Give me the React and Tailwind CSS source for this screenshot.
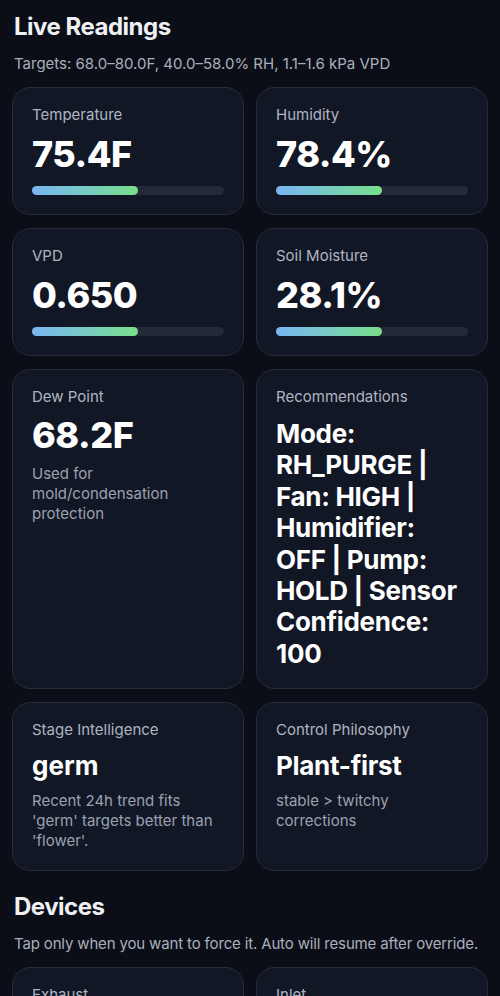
import React from "react";

const font = { fontFamily: "Inter, 'Noto Sans', sans-serif" };

function Bar({ pct }) {
  return (
    <div className="mt-3 h-[9px] w-full rounded-full bg-[#232938]">
      <div
        className="h-full rounded-full bg-gradient-to-r from-[#7ab4f2] to-[#79de88]"
        style={{ width: `${pct}%` }}
      />
    </div>
  );
}

function Card({ children }) {
  return (
    <div className="rounded-[18px] border border-[#262c3b] bg-[#121726] px-[19px] pt-[17px] pb-[19px]">
      {children}
    </div>
  );
}

function Label({ children }) {
  return <div className="text-[15px] leading-5 text-[#aeb5c2]">{children}</div>;
}

function Reading({ label, value, pct }) {
  return (
    <Card>
      <Label>{label}</Label>
      <div className="mt-[9px] text-[36px] font-extrabold leading-10 tracking-[-0.5px] text-white">
        {value}
      </div>
      <Bar pct={pct} />
    </Card>
  );
}

function Note({ children }) {
  return <div className="text-[15px] leading-5 text-[#9aa2b0]">{children}</div>;
}

export default function App() {
  return (
    <div style={font} className="min-h-screen bg-[#0b0e16] px-3 pt-[11px] pb-6 text-white">
      <h1 className="px-[2px] text-2xl font-bold leading-8 tracking-[-0.5px] text-[#eef0f4]">
        Live Readings
      </h1>
      <p className="mt-[11px] px-[2px] text-[15px] leading-5 text-[#a9b0bd]">
        Targets: 68.0–80.0F, 40.0–58.0% RH, 1.1–1.6 kPa VPD
      </p>

      <div className="mt-[13px] grid grid-cols-2 gap-x-3 gap-y-[13px]">
        <Reading label="Temperature" value="75.4F" pct={55} />
        <Reading label="Humidity" value="78.4%" pct={55} />
        <Reading label="VPD" value="0.650" pct={55} />
        <Reading label="Soil Moisture" value="28.1%" pct={55} />

        <Card>
          <Label>Dew Point</Label>
          <div className="mt-2 text-[36px] font-extrabold leading-10 tracking-[-0.5px] text-white">
            68.2F
          </div>
          <div className="mt-[9px]">
            <Note>Used for mold/condensation protection</Note>
          </div>
        </Card>
        <Card>
          <Label>Recommendations</Label>
          <div className="mt-[11px] text-[26px] font-bold leading-[31.4px] tracking-[-0.3px] text-white">
            Mode: RH_PURGE | Fan: HIGH | Humidifier: OFF | Pump: HOLD | Sensor Confidence: 100
          </div>
        </Card>

        <Card>
          <Label>Stage Intelligence</Label>
          <div className="mt-[10px] text-[26px] font-bold leading-[31px] text-white">germ</div>
          <div className="mt-[10px]">
            <Note>Recent 24h trend fits 'germ' targets better than 'flower'.</Note>
          </div>
        </Card>
        <Card>
          <Label>Control Philosophy</Label>
          <div className="mt-[10px] text-[26px] font-bold leading-[31px] tracking-[-0.3px] text-white">
            Plant-first
          </div>
          <div className="mt-[10px]">
            <Note>stable &gt; twitchy corrections</Note>
          </div>
        </Card>
      </div>

      <h2 className="mt-[20px] px-[2px] text-2xl font-bold leading-8 tracking-[-0.5px] text-[#eef0f4]">
        Devices
      </h2>
      <p className="mt-[11px] px-[2px] text-[15px] leading-5 tracking-[-0.15px] text-[#a9b0bd]">
        Tap only when you want to force it. Auto will resume after override.
      </p>

      <div className="mt-[13px] grid grid-cols-2 gap-3">
        <Card>
          <Label>Exhaust</Label>
          <div className="h-24" />
        </Card>
        <Card>
          <Label>Inlet</Label>
          <div className="h-24" />
        </Card>
      </div>
    </div>
  );
}
